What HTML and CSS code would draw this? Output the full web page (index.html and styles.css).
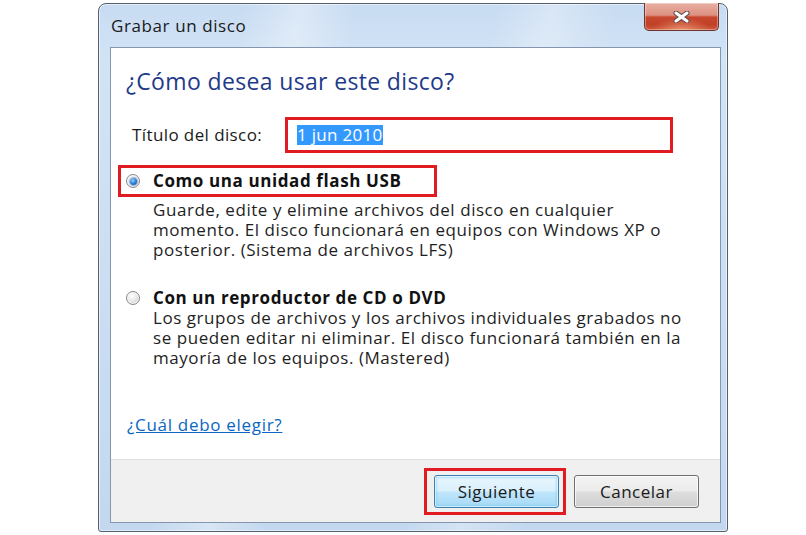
FILE: index.html
```html
<!DOCTYPE html>
<html lang="es">
<head>
<meta charset="utf-8">
<title>Grabar un disco</title>
<link rel="stylesheet" href="styles.css">
</head>
<body>
<div class="stage">
  <div class="window">
    <div class="titlebar">
      <span class="title">Grabar un disco</span>
      <button class="close" aria-label="Cerrar">
        <svg width="17" height="12" viewBox="0 0 17 12">
          <path d="M3 2 L14 10 M14 2 L3 10" stroke="#5a4a48" stroke-width="5" stroke-linecap="round" fill="none"/>
          <path d="M3 2 L14 10 M14 2 L3 10" stroke="#ffffff" stroke-width="3" stroke-linecap="round" fill="none"/>
        </svg>
      </button>
    </div>
    <div class="client">
      <div class="content">
        <h1 class="heading">¿Cómo desea usar este disco?</h1>
        <div class="title-row">
          <span class="field-label">Título del disco:</span>
          <div class="field"><span class="selected">1 jun 2010</span></div>
        </div>
        <div class="option">
          <div class="option-head marked">
            <span class="radio checked"></span>
            <span class="option-label">Como una unidad flash USB</span>
          </div>
          <div class="desc first">
            <div class="line">Guarde, edite y elimine archivos del disco en cualquier</div>
            <div class="line">momento. El disco funcionará en equipos con Windows XP o</div>
            <div class="line">posterior. (Sistema de archivos LFS)</div>
          </div>
        </div>
        <div class="option second">
          <div class="option-head">
            <span class="radio"></span>
            <span class="option-label">Con un reproductor de CD o DVD</span>
          </div>
          <div class="desc">
            <div class="line">Los grupos de archivos y los archivos individuales grabados no</div>
            <div class="line">se pueden editar ni eliminar. El disco funcionará también en la</div>
            <div class="line">mayoría de los equipos. (Mastered)</div>
          </div>
        </div>
        <a class="help-link" href="#">¿Cuál debo elegir?</a>
      </div>
      <div class="footer">
        <div class="marked-btn">
          <button class="btn default">Siguiente</button>
        </div>
        <button class="btn">Cancelar</button>
      </div>
    </div>
  </div>
</div>
</body>
</html>
```
FILE: styles.css
```css
* { box-sizing: border-box; }
html, body { margin: 0; padding: 0; background: #ffffff; }
body {
  width: 806px;
  height: 535px;
  overflow: hidden;
  font-family: "Open Sans", "Noto Sans", sans-serif;
  color: #1a1a1a;
}

.stage {
  padding: 3px 0 0 98px;
}

.window {
  width: 630px;
  height: 529px;
  border: 1px solid #56606c;
  border-radius: 8px 8px 3px 3px;
  padding: 0 6px 8px 11px;
  background:
    linear-gradient(100deg, rgba(255,255,255,0) 20%, rgba(255,255,255,0.35) 28%, rgba(255,255,255,0) 36%, rgba(255,255,255,0) 55%, rgba(255,255,255,0.3) 63%, rgba(255,255,255,0) 72%),
    linear-gradient(180deg, #c7dbf2 0%, #d2e3f5 10%, #c3d8ef 100%);
  box-shadow: inset 0 0 0 1px rgba(255,255,255,0.55);
  display: flex;
  flex-direction: column;
}

.titlebar {
  height: 43px;
  display: flex;
  justify-content: space-between;
  align-items: flex-start;
}
.title {
  margin-top: 11px;
  margin-left: 1px;
  font-size: 17px;
  line-height: 22px;
  letter-spacing: 0.6px;
  color: #1a1a1a;
}
.close {
  margin-top: -1px;
  margin-right: 2px;
  width: 75px;
  height: 28px;
  padding: 0;
  border: 1px solid #6f352c;
  border-top: none;
  border-radius: 0 0 5px 5px;
  background:
    radial-gradient(ellipse 40% 45% at 50% 100%, rgba(255,190,150,0.55), rgba(255,190,150,0) 100%),
    linear-gradient(180deg, #e8b0a3 0%, #dd9181 45%, #c8472f 52%, #c14128 80%, #cc5a3c 100%);
  box-shadow: inset 0 0 0 1px rgba(255,255,255,0.35);
  display: flex;
  align-items: center;
  justify-content: center;
}
.close svg { display: block; margin-top: 1px; }

.client {
  flex: 1;
  border: 1px solid #8396ad;
  background: #ffffff;
  display: flex;
  flex-direction: column;
}

.content {
  flex: 1;
  padding: 18px 0 0 15px;
}

.heading {
  margin: 0;
  font-size: 23px;
  line-height: 30px;
  letter-spacing: 0.35px;
  font-weight: normal;
  color: #1f3a8a;
}

.title-row {
  margin-top: 21px;
  height: 36px;
  display: flex;
  align-items: center;
  padding-left: 6px;
}
.field-label {
  width: 153px;
  font-size: 17px;
  line-height: 22px;
  letter-spacing: 0.4px;
}
.field {
  width: 388px;
  height: 36px;
  border: 3px solid #e11b22;
  padding-left: 9px;
  display: flex;
  align-items: center;
}
.selected {
  background: #3399ff;
  color: #ffffff;
  font-size: 17px;
  line-height: 20px;
  letter-spacing: 0.3px;
}

.option-head {
  display: flex;
  align-items: center;
  gap: 13px;
  height: 20px;
}
.option-head.marked {
  margin-top: 12px;
  margin-left: -8px;
  width: 319px;
  height: 32px;
  border: 3px solid #e11b22;
  padding-left: 5px;
}
.option.second { margin-top: 28px; }

.radio {
  width: 14px;
  height: 14px;
  border-radius: 50%;
  border: 1px solid #85888b;
  background: radial-gradient(circle at 40% 35%, #ffffff 0%, #e9e9e9 45%, #c4c4c4 100%);
  box-shadow: inset 0 0 0 1px rgba(255,255,255,0.8);
  flex: none;
  display: flex;
  align-items: center;
  justify-content: center;
}
.radio.checked::after {
  content: "";
  width: 7px;
  height: 7px;
  border-radius: 50%;
  background: radial-gradient(circle at 40% 35%, #9fd3ff 0%, #2b7fd4 50%, #134e93 100%);
  box-shadow: 0 0 1px 1px rgba(40,110,190,0.45);
}

.option-label {
  font-size: 17px;
  font-weight: bold;
  line-height: 20px;
  letter-spacing: 0.6px;
  color: #111111;
}

.desc {
  margin: 0 0 0 27px;
  font-size: 17px;
  letter-spacing: 0.55px;
  white-space: nowrap;
  color: #1e1e1e;
}
.desc .line {
  height: 20px;
  line-height: 20px;
}
.desc.first { margin-top: 3px; }

.help-link {
  display: inline-block;
  margin-top: 47px;
  margin-left: 1px;
  font-size: 17px;
  line-height: 20px;
  letter-spacing: 0.7px;
  color: #0a66c2;
  text-decoration: underline;
}

.footer {
  height: 63px;
  border-top: 1px solid #dfdfdf;
  background: #f0f0f0;
  display: flex;
  justify-content: flex-end;
  align-items: flex-start;
  padding: 15px 21px 0 0;
  gap: 15px;
}
.marked-btn { position: relative; }
.marked-btn::after {
  content: "";
  position: absolute;
  top: -7px;
  bottom: -7px;
  left: -10px;
  right: -7px;
  border: 3px solid #e11b22;
  pointer-events: none;
}
.btn {
  width: 125px;
  height: 33px;
  padding: 0;
  border: 1px solid #707070;
  border-radius: 3px;
  font-family: "Open Sans", "Noto Sans", sans-serif;
  font-size: 17px;
  letter-spacing: 0.5px;
  color: #1a1a1a;
  background: linear-gradient(180deg, #f3f3f3 0%, #ebebeb 48%, #dddddd 52%, #cfcfcf 100%);
  box-shadow: inset 0 0 0 1px rgba(255,255,255,0.7);
}
.btn.default {
  border-color: #3c7fb1;
  background: linear-gradient(180deg, #eaf6fd 0%, #d9f0fc 48%, #bee6fd 52%, #a7d9f5 100%);
  box-shadow: inset 0 0 0 1px rgba(255,255,255,0.6), inset 0 0 2px 2px rgba(105,200,240,0.45);
}
```
